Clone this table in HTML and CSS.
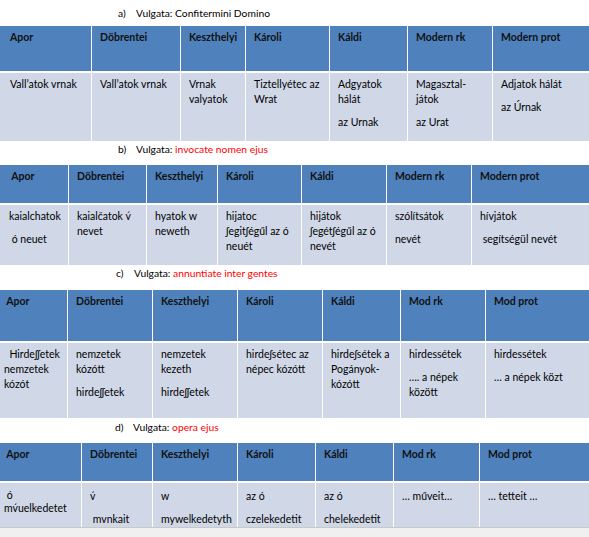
FILE: index.html
```html
<!DOCTYPE html>
<html lang="hu">
<head>
<meta charset="utf-8">
<title>Vulgata</title>
<link rel="stylesheet" href="styles.css">
</head>
<body>
<div class="page">
  <div class="caption cap-a"><span class="label">a)</span>Vulgata: Confitermini Domino</div>
  <div class="tbl tbl-a">
    <div class="th first">Apor</div>
    <div class="th">Döbrentei</div>
    <div class="th">Keszthelyi</div>
    <div class="th">Károli</div>
    <div class="th">Káldi</div>
    <div class="th">Modern rk</div>
    <div class="th">Modern prot</div>
    <div class="td first"><p>Vall’atok vrnak</p></div>
    <div class="td"><p>Vall’atok vrnak</p></div>
    <div class="td"><p>Vrnak valyatok</p></div>
    <div class="td"><p>Tiztellyétec az Wrat</p></div>
    <div class="td"><p>Adgyatok hálát</p><p>az Urnak</p></div>
    <div class="td"><p>Magasztal-játok</p><p>az Urat</p></div>
    <div class="td"><p>Adjatok hálát</p><p>az Úrnak</p></div>
  </div>

  <div class="caption cap-b"><span class="label">b)</span>Vulgata: <span class="red">invocate nomen ejus</span></div>
  <div class="tbl tbl-b">
    <div class="th first">&nbsp;Apor</div>
    <div class="th">Döbrentei</div>
    <div class="th">Keszthelyi</div>
    <div class="th">Károli</div>
    <div class="th">Káldi</div>
    <div class="th">Modern rk</div>
    <div class="th">Modern prot</div>
    <div class="td first"><p>kaialchatok</p><p>&nbsp;ó neuet</p></div>
    <div class="td"><p>kaialčatok v́ nevet</p></div>
    <div class="td"><p>hyatok w neweth</p></div>
    <div class="td"><p>hijatoc ʃegitʃégűl az ó neuét</p></div>
    <div class="td"><p>hijátok ʃegétʃégűl az ó nevét</p></div>
    <div class="td"><p>szólítsátok</p><p>nevét</p></div>
    <div class="td"><p>hívjátok</p><p>&nbsp;segítségül nevét</p></div>
  </div>

  <div class="caption cap-c"><span class="label">c)</span>Vulgata: <span class="red">annuntiate inter gentes</span></div>
  <div class="tbl tbl-c">
    <div class="th first">&nbsp;Apor</div>
    <div class="th">Döbrentei</div>
    <div class="th">Keszthelyi</div>
    <div class="th">Károli</div>
    <div class="th">Káldi</div>
    <div class="th">Mod rk</div>
    <div class="th">Mod prot</div>
    <div class="td first"><p>&nbsp;&nbsp;Hirdeʃʃetek nemzetek kózót</p></div>
    <div class="td"><p>nemzetek kózótt</p><p>hirdeʃʃetek</p></div>
    <div class="td"><p>nemzetek kezeth</p><p>hirdeʃʃetek</p></div>
    <div class="td"><p>hirdeʃsétec az népec kózótt</p></div>
    <div class="td"><p>hirdeʃsétek a Pogányok-kózótt</p></div>
    <div class="td"><p>hirdessétek</p><p>…. a népek között</p></div>
    <div class="td"><p>hirdessétek</p><p>… a népek közt</p></div>
  </div>

  <div class="caption cap-d"><span class="label">d)</span>Vulgata: <span class="red">opera ejus</span></div>
  <div class="tbl tbl-d">
    <div class="th first">&nbsp;Apor</div>
    <div class="th">Döbrentei</div>
    <div class="th">Keszthelyi</div>
    <div class="th">Károli</div>
    <div class="th">Káldi</div>
    <div class="th">Mod rk</div>
    <div class="th">Mod prot</div>
    <div class="td first"><p class="tight">&nbsp;ó<br>mv́uelkedetet</p></div>
    <div class="td"><p>v́</p><p>&nbsp;mvnkait</p></div>
    <div class="td"><p>w</p><p>mywelkedetyth</p></div>
    <div class="td"><p>az ó</p><p>czelekedetit</p></div>
    <div class="td"><p>az ó</p><p>chelekedetit</p></div>
    <div class="td"><p>… műveit…</p></div>
    <div class="td"><p>… tetteit …</p></div>
  </div>
  <div class="footer"></div>
</div>
</body>
</html>
```

FILE: styles.css
```css
html, body {
  margin: 0;
  padding: 0;
  background: #ffffff;
}

.page {
  width: 589px;
  font-family: Lato, "Open Sans", "Liberation Sans", sans-serif;
  font-size: 10.5px;
  color: #000000;
}

.caption {
  box-sizing: border-box;
  font-size: 10.3px;
  line-height: 15px;
  padding-left: 118px;
  white-space: nowrap;
}

.caption .label {
  display: inline-block;
  width: 18px;
}

.red {
  color: #ff0000;
}

.cap-a { height: 26px; padding-top: 6px; }
.cap-b { height: 24px; padding-top: 1px; }
.cap-c { height: 25px; padding-top: 1px; padding-left: 116px; }
.cap-d { height: 25px; padding-top: 2px; padding-left: 115px; }

.tbl {
  display: grid;
  column-gap: 1px;
  row-gap: 2px;
  background: #ffffff;
}

.tbl-a { grid-template-columns: 91px 88px 64px 83px 77px 84px 96px; grid-template-rows: 45px 68px; }
.tbl-b { grid-template-columns: 68px 77px 70px 83px 84px 84px 117px; grid-template-rows: 38px 60px; }
.tbl-c { grid-template-columns: 67px 84px 84px 84px 77px 84px 103px; grid-template-rows: 51px 75px; }
.tbl-d { grid-template-columns: 81px 70px 84px 77px 77px 85px 109px; grid-template-rows: 38px 44px; }

.th, .td {
  box-sizing: border-box;
  padding: 4px 6px 0 8px;
  line-height: 15px;
  overflow: hidden;
}

.th {
  background: #4f81bd;
  font-weight: bold;
  color: #111111;
}

.td {
  background: #d0d8e8;
}

.td p {
  margin: 0 0 8px 0;
}

.td p.tight {
  line-height: 13px;
}

.tbl-a .first { padding-left: 10px; }
.tbl-b .first { padding-left: 9px; padding-right: 2px; }
.tbl-c .first { padding-left: 4px; padding-right: 2px; }
.tbl-d .first { padding-left: 4px; padding-right: 2px; }

.tbl-d .td { padding-top: 6px; }

.footer {
  height: 9px;
  border-top: 1px solid #c8c8c8;
  background: #f0f0f0;
}
```
